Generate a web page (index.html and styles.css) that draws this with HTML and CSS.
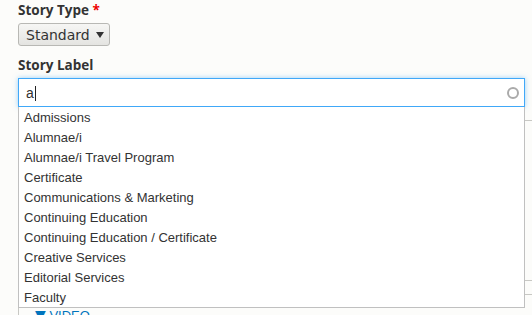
FILE: index.html
```html
<!DOCTYPE html>
<html lang="en">
<head>
    <meta charset="UTF-8">
    <meta name="viewport" content="width=device-width, initial-scale=1.0">
    <title>Story</title>
    <link rel="stylesheet" href="styles.css">
</head>
<body>

    <div class="form-item">
        <label class="form-label">Story Type <span class="required">*</span></label>
        <div class="select">
            <span>Standard</span>
            <span class="select-arrow"></span>
        </div>
    </div>

    <div class="form-item autocomplete">
        <label class="form-label">Story Label</label>
        <div class="text-input">
            <span class="value">a</span><span class="caret"></span>
            <svg class="throbber" width="14" height="14" viewBox="0 0 14 14">
                <circle cx="7" cy="7" r="5" fill="none" stroke="#aaa" stroke-width="2"/>
            </svg>
        </div>

        <ul class="suggestions">
            <li>Admissions</li>
            <li>Alumnae/i</li>
            <li>Alumnae/i Travel Program</li>
            <li>Certificate</li>
            <li>Communications &amp; Marketing</li>
            <li>Continuing Education</li>
            <li>Continuing Education / Certificate</li>
            <li>Creative Services</li>
            <li>Editorial Services</li>
            <li>Faculty</li>
        </ul>
    </div>

    <!-- form sections behind the autocomplete list -->
    <div class="section section-body"></div>
    <div class="section section-video">
        <span class="summary-arrow">&#9660;</span> VIDEO
    </div>

</body>
</html>
```

FILE: styles.css
```css
* {
    margin: 0;
    padding: 0;
    box-sizing: border-box;
}

body {
    width: 532px;
    height: 315px;
    overflow: hidden;
    background-color: #fcfcfa;
    color: #333;
    font-family: 'Open Sans', sans-serif;
    padding: 0 7px 0 18px;
}

.form-item {
    display: flex;
    flex-direction: column;
    align-items: flex-start;
}

.form-label {
    font-size: 13.5px;
    font-weight: 700;
    line-height: 20px;
    color: #333;
    margin-bottom: 3px;
}

.required {
    color: #e00;
}

.select {
    height: 23px;
    width: 92px;
    display: flex;
    align-items: center;
    justify-content: space-between;
    padding: 0 5px 0 7px;
    font-family: 'DejaVu Sans', sans-serif;
    font-size: 14px;
    color: #333;
    border: 1px solid #b8b8b4;
    border-radius: 3px;
    background: linear-gradient(#f6f6f4, #e4e4e1);
    margin-bottom: 9px;
}

.select-arrow {
    width: 0;
    height: 0;
    border-left: 4px solid transparent;
    border-right: 4px solid transparent;
    border-top: 6px solid #333;
}

.autocomplete {
    position: relative;
    align-items: stretch;
    z-index: 2;
}

.autocomplete .form-label {
    margin-bottom: 3px;
}

.text-input {
    height: 29px;
    display: flex;
    align-items: center;
    padding: 0 6px 0 7px;
    font-family: 'Liberation Sans', Arial, sans-serif;
    font-size: 14px;
    color: #333;
    background: #fff;
    border: 1px solid #40a8f8;
    box-shadow: 0 0 5px rgba(64, 168, 248, 0.5);
}

.caret {
    width: 1px;
    height: 15px;
    background: #222;
    margin-left: 1px;
    margin-top: 2px;
}

.throbber {
    margin-left: auto;
    margin-right: -2px;
}

.suggestions {
    position: absolute;
    top: 100%;
    left: 0;
    right: 0;
    list-style: none;
    background: #fff;
    border: 1px solid #c0c0c0;
    border-top: none;
    font-family: 'Liberation Sans', Arial, sans-serif;
    font-size: 13px;
    color: #333;
}

.suggestions li {
    height: 20px;
    line-height: 22px;
    padding-left: 5px;
}

.section {
    width: 600px;
    border: 1px solid #c8c8c4;
    position: relative;
    z-index: 1;
}

.section-body {
    margin-top: 13px;
    height: 161px;
}

.section-video {
    margin-top: 13px;
    height: 60px;
    padding: 12px 0 0 16px;
    font-family: 'Liberation Sans', Arial, sans-serif;
    font-size: 13px;
    line-height: 16px;
    color: #0074bd;
}

.summary-arrow {
    font-family: 'DejaVu Sans', sans-serif;
    font-size: 14px;
}
```
